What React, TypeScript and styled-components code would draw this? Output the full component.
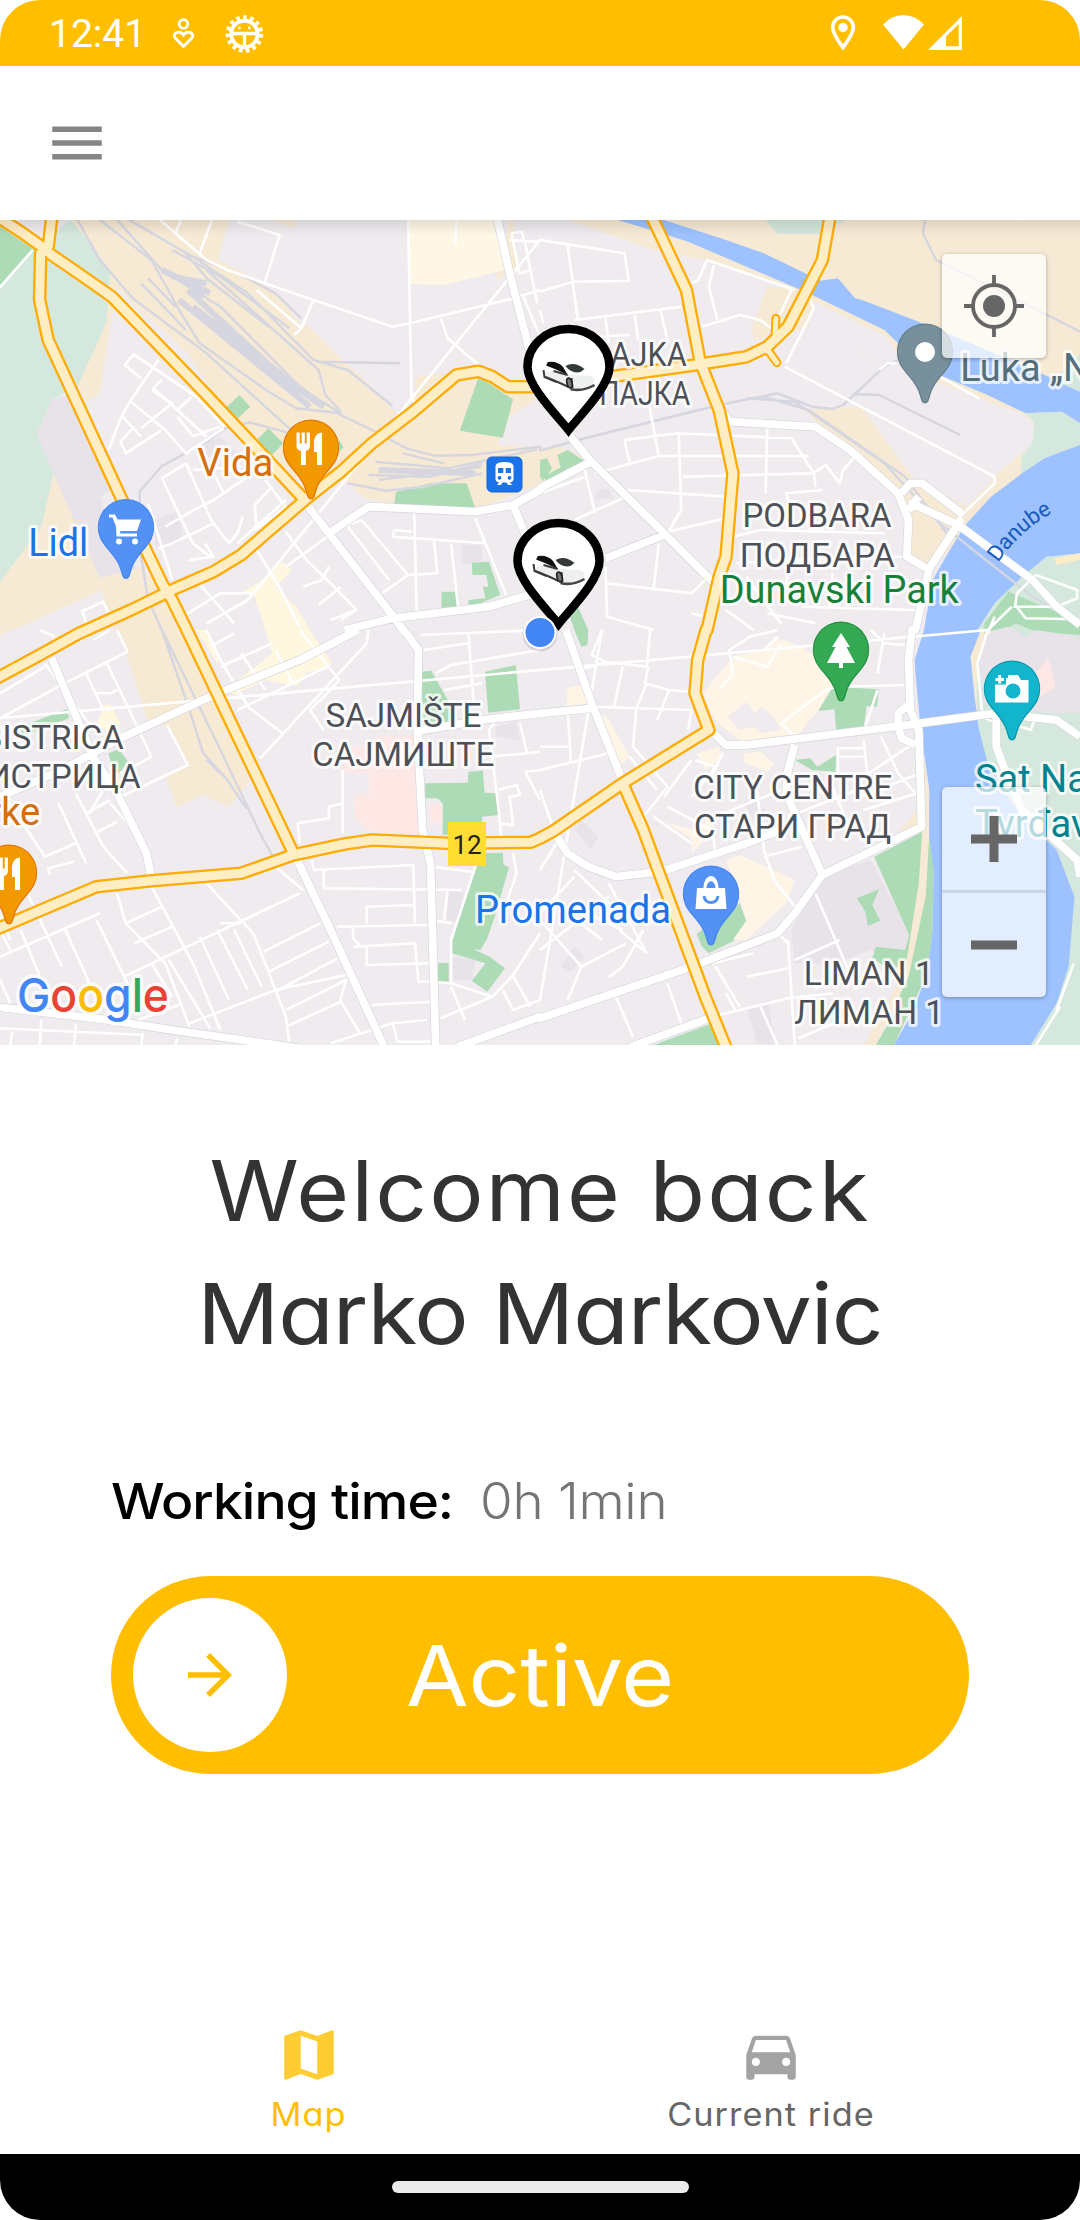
import React from "react";
import styled, { createGlobalStyle } from "styled-components";

const GlobalStyle = createGlobalStyle`
  * { box-sizing: border-box; }
  html, body { margin: 0; padding: 0; background: #fff; }
`;

const AMBER = "#ffbf00";
const UI_FONT = `Inter, "Open Sans", sans-serif`;

/* ---------- page ---------- */

const Screen = styled.div`
  width: 1080px;
  height: 2220px;
  display: flex;
  flex-direction: column;
  overflow: hidden;
  border-radius: 40px;
  background: #fff;
  font-family: ${UI_FONT};
  font-feature-settings: "cv11" 1;
`;

const StatusBar = styled.div`
  flex: 0 0 66px;
  height: 66px;
  display: flex;
  align-items: center;
  background: ${AMBER};
  color: #fff;
  padding: 0 118px 0 49px;
`;

const Clock = styled.span`
  width: 121px;
  font: 400 39px/60px Roboto, sans-serif;
  padding-top: 2px;
`;

const StatusIcons = styled.div<{ $end?: boolean }>`
  display: flex;
  align-items: center;
  margin-left: ${(p) => (p.$end ? "auto" : "0")};
`;

const Toolbar = styled.header`
  flex: 0 0 154px;
  display: flex;
  align-items: center;
  padding-left: 44px;
  background: #fff;
`;

const MenuButton = styled.button`
  display: flex;
  border: 0;
  padding: 0;
  background: none;
  color: #858585;
`;

const MapArea = styled.section`
  position: relative;
  flex: 0 0 825px;
  overflow: hidden;
  &::after {
    content: "";
    position: absolute;
    inset: 0 0 auto 0;
    height: 16px;
    background: linear-gradient(rgba(0, 0, 0, 0.1), rgba(0, 0, 0, 0));
  }
`;

const MapSvg = styled.svg`
  display: block;
`;

const MapControl = styled.div<{ $top: number }>`
  position: absolute;
  right: 34px;
  top: ${(p) => p.$top}px;
  width: 104px;
  display: flex;
  flex-direction: column;
  border-radius: 5px;
  background: rgba(255, 255, 255, 0.7);
  box-shadow: 0 1px 4px rgba(0, 0, 0, 0.3);
`;

const ControlButton = styled.button<{ $divided?: boolean }>`
  height: ${(p) => (p.$divided ? 106 : 104)}px;
  display: flex;
  align-items: center;
  justify-content: center;
  padding: 0;
  border: 0;
  border-bottom: ${(p) => (p.$divided ? "3px solid rgba(150,160,180,.3)" : "0")};
  background: none;
`;

const Greeting = styled.h1`
  margin: 84px 0 0;
  text-align: center;
  font-weight: 400;
  font-size: 84px;
  line-height: 123px;
  color: #333;
`;

const GreetingLine = styled.span<{ $spacing: number }>`
  display: block;
  letter-spacing: ${(p) => p.$spacing}px;
  transform: scaleX(1.08);
`;

const Shift = styled.main`
  flex: 1;
  display: flex;
  flex-direction: column;
  padding: 89px 111px 0;
`;

const WorkingTime = styled.div`
  display: grid;
  grid-template-columns: 369px 1fr;
  height: 74px;
  align-items: center;
  font-size: 50px;
  line-height: 74px;
`;

const TimeLabel = styled.span`
  justify-self: start;
  font-weight: 500;
  color: #000;
  letter-spacing: -0.9px;
  transform: scaleX(1.07);
  transform-origin: left;
`;

const TimeValue = styled.span`
  justify-self: start;
  font-weight: 300;
  color: #757575;
  letter-spacing: -0.3px;
  transform: scaleX(1.06);
  transform-origin: left;
`;

const SlideButton = styled.div`
  display: grid;
  grid-template-columns: 154px 1fr 154px;
  align-items: center;
  height: 198px;
  margin-top: 38px;
  padding: 0 22px;
  border-radius: 99px;
  background: ${AMBER};
`;

const Knob = styled.div`
  width: 154px;
  height: 154px;
  border-radius: 50%;
  display: flex;
  align-items: center;
  justify-content: center;
  background: #fff;
  color: ${AMBER};
`;

const SlideLabel = styled.span`
  text-align: center;
  font-size: 84px;
  color: #fff;
  transform: scaleX(1.08);
`;

const Tabs = styled.nav`
  flex: 0 0 154px;
  display: grid;
  grid-template-columns: 462px 462px;
  justify-content: center;
`;

const Tab = styled.a<{ $active?: boolean }>`
  display: flex;
  flex-direction: column;
  align-items: center;
  padding-top: 22px;
  font-size: 32px;
  line-height: 54px;
  letter-spacing: 1px;
  color: ${(p) => (p.$active ? AMBER : "#666")};
  svg { color: ${(p) => (p.$active ? "#ffcc33" : "#a3a3a3")}; }
`;

const TabLabel = styled.span`
  transform: scaleX(1.07);
`;

const SystemNav = styled.div`
  flex: 0 0 66px;
  display: flex;
  align-items: center;
  justify-content: center;
  background: #000;
`;

const HomePill = styled.div`
  width: 297px;
  height: 12px;
  border-radius: 6px;
  background: #ebebeb;
`;

/* ---------- glyph icons on the 24 unit grid ---------- */

const Icon = ({ d, size = 66 }: { d: string; size?: number }) => (
  <svg width={size} height={size} viewBox="0 0 24 24" fill="currentColor">
    <path d={d} />
  </svg>
);

const ICONS = {
  menu: "M3 18h18v-2H3v2zm0-5h18v-2H3v2zm0-7v2h18V6H3z",
  arrow: "M12 4l-1.41 1.41L16.17 11H4v2h12.17l-5.58 5.59L12 20l8-8z",
  map: "M20.5 3l-.16.03L15 5.1 9 3 3.36 4.9c-.21.07-.36.25-.36.48V20.5c0 .28.22.5.5.5l.16-.03L9 18.9l6 2.1 5.64-1.9c.21-.07.36-.25.36-.48V3.5c0-.28-.22-.5-.5-.5zM15 19l-6-2.11V5l6 2.11V19z",
  car: "M18.92 6.01C18.72 5.42 18.16 5 17.5 5h-11c-.66 0-1.21.42-1.42 1.01L3 12v8c0 .55.45 1 1 1h1c.55 0 1-.45 1-1v-1h12v1c0 .55.45 1 1 1h1c.55 0 1-.45 1-1v-8l-2.08-5.99zM6.5 16c-.83 0-1.5-.67-1.5-1.5S5.67 13 6.5 13s1.5.67 1.5 1.5S7.33 16 6.5 16zm11 0c-.83 0-1.5-.67-1.5-1.5s.67-1.5 1.5-1.5 1.5.67 1.5 1.5-.67 1.5-1.5 1.5zM5 11l1.5-4.5h11L19 11H5z",
};

const StatusLeft = () => (
  <svg width="96" height="66" viewBox="170 0 96 66" fill="none" stroke="#fff">
    <circle cx="183.5" cy="24" r="4.3" strokeWidth="2.8" />
    <path d="M183.500 46.500L175.600 38.400C172.800 35.500 175 32.300 178.500 32.300Q181.500 32.300 183.500 35Q185.500 32.300 188.500 32.300C192 32.300 194.200 35.500 191.400 38.400Z" strokeWidth="2.9" />
    <circle cx="244.4" cy="34" r="13.2" strokeWidth="4" />
    <circle cx="244.4" cy="34" r="16.8" strokeWidth="4" strokeDasharray="3.6 3.437" />
    <path d="M231 33.500H258M244.4 34V48" strokeWidth="3.4" />
    <circle cx="239.4" cy="28" r="1.4" fill="#fff" stroke="none" />
    <circle cx="249.4" cy="28" r="1.4" fill="#fff" stroke="none" />
  </svg>
);

const StatusRight = () => (
  <svg width="134" height="66" viewBox="828 0 134 66" fill="none" stroke="#fff">
    <path d="M843 47.5C839 42 832.7 34 832.7 27.3A10.3 10.3 0 0 1 853.3 27.3C853.3 34 847 42 843 47.5Z" strokeWidth="3.6" />
    <circle cx="843" cy="27.5" r="4.7" fill="#fff" stroke="none" />
    <path d="M903.5 49.5L883 24.5Q891.5 15.3 903.5 15.3T924 24.5Z" fill="#fff" stroke="none" />
    <path d="M928 50L962 16V50ZM946 46.2H958.7V24L946 36.6Z" fill="#fff" stroke="none" fillRule="evenodd" />
  </svg>
);

/* ---------- map geometry ----------
   Shapes are written per survey tile (A B / C D); a tile letter switches
   the origin and "m" starts a new sub path. */

const ORIGIN: Record<string, [number, number]> = {
  A: [0, -10],
  B: [540, -10],
  C: [0, 410],
  D: [540, 410],
};

const at = (tile: string, x: number, y: number): [number, number] => [
  ORIGIN[tile][0] + x / 2.9037,
  ORIGIN[tile][1] + y / 3,
];

const trace = (src: string, close = false) => {
  let tile = "A";
  let pen = "M";
  let out = "";
  for (const token of src.trim().split(/\s+/)) {
    if (ORIGIN[token]) tile = token;
    else if (token === "m") {
      out += close ? "Z" : "";
      pen = "M";
    } else {
      const [x, y] = token.split(",").map(Number);
      const [px, py] = at(tile, x, y);
      out += `${pen}${px.toFixed(1)} ${py.toFixed(1)}`;
      pen = "L";
    }
  }
  return out + (close ? "Z" : "");
};

const AREAS: [string, string][] = [
  // sand coloured railway and industrial ground
  ["#f7ead5", `A 205,30 665,30 632,150 740,205 800,250 880,350 895,345 1000,455 1060,510 1160,620 1200,600 1208,502 1280,490 1330,500 1390,500 1490,540 1568,560 1480,620 1445,705 1568,712 B 0,715 50,712 90,722 140,755 0,840 A 1560,825 1380,900 1140,882 1060,865 985,800 930,830 850,800 740,740 650,600 545,430 340,235 320,350 290,550 250,575 225,530`],
  ["#f7ead5", `A 95,150 110,110 150,130 120,400 95,260`],
  ["#f7ead5", `A 155,790 290,1105 400,1070 470,1130 540,1260 C 560,0 725,455 665,530 590,495 512,530 482,440 545,405 490,290 430,280 345,0 A 330,1260 295,1140 60,1250 0,1275 0,1110 120,950`],
  ["#f7ead5", `A 790,30 860,30 855,55`],
  ["#f7ead5", `A 1440,205 1445,180 1480,30 1490,30 1500,190`],
  ["#fff7e6", `A 1185,30 1440,30 1465,180 1290,225 1192,222`],
  ["#f7ead5", `B 85,30 360,30 1568,30 1568,600 1435,625 1430,700 1400,790 1310,860 1235,945 1190,1020 1130,1080 1080,1040 1075,930 1030,840 900,720 765,600 930,590 975,455 790,350 620,390 615,350 660,230 740,235 480,150 330,120`],
  ["#efebef", `B 795,275 1000,375 1060,460 1160,520 1400,612 1435,635 1430,700 1320,800 1240,890 1080,800 940,600 930,585 975,455 780,350`],
  ["#f7ead5", `D 1275,0 1300,0 1270,100 1280,220 1265,260 1250,80`],
  ["#e8e3e8", `A 150,570 210,550 250,575 335,830 290,860 355,1050 400,1075 290,1105 155,790 107,670`],
  ["#e8e3e8", `A 590,700 640,680 700,740 600,740 m 450,930 510,905 530,960 520,1000 450,1010 m 1340,1005 1400,1005 1400,1065 1340,1060`],
  ["#e8e3e8", `B 165,840 200,835 210,865 160,870`],
  ["#e8e3e8", `D 825,735 960,690 1080,920 1060,1010 960,960 860,1000 740,1000 730,900 m 600,1130 665,1110 680,1245 630,1240 m 60,1010 100,950 130,980 90,1025 m 100,600 120,570 170,620 150,660 m 590,520 620,505 660,545 620,565`],
  ["#e8e3e8", `C 1440,290 1500,275 1510,330 1440,320 m 1300,780 1350,790 1330,880 1290,865 m 1310,980 1380,990 1370,1050 1310,1050`],
  // parkland
  ["#d5e8dd", `A 0,50 100,110 205,30 250,85 320,185 310,335 225,530 150,570 107,670 155,790 120,950 0,1115`],
  ["#addbb6", `A 0,50 100,120 0,225 m 695,555 727,590 685,630 650,600 m 780,655 822,700 790,735 745,690 m 985,690 998,712 975,735 m 1390,500 1490,568 1460,683 1335,662 m 1150,845 1250,820 1355,820 1380,895 1145,882 m 1370,1058 1420,1055 1452,1155 1360,1195 1360,1170 1410,1165 1402,1130 1418,1130 1412,1095 1372,1095 m 1282,1145 1330,1145 1332,1190 1282,1195`],
  ["#addbb6", `B 50,735 80,720 132,755 20,815 10,800 60,772 m 0,750 20,745 35,775 8,812 0,800 m 80,1200 110,1190 140,1260 D 138,45 120,50 100,0`],
  ["#addbb6", `C 1225,125 1252,122 1300,210 1330,285 1225,300 m 1408,125 1498,105 1510,238 1418,248 m 1235,460 1358,458 1360,425 1402,422 1407,488 1440,490 1447,555 1400,560 1400,610 1285,615 1285,520 1270,505 1235,505 m 1390,670 1460,668 1462,705 1478,712 1440,850 1415,925 1395,960 1375,958 1422,980 1466,1015 1415,1085 1370,1052 1410,1000 1312,970 1312,930 m 1272,1000 1303,998 1303,1055 1272,1055 m 60,290 195,237 200,265 60,320 m 315,370 345,358 372,395 345,430 330,425`],
  ["#addbb6", `D 850,170 984,178 978,230 948,228 940,295 860,302 855,238 808,243 m 740,390 785,385 805,410 860,375 858,425 790,420 m 970,680 1130,595 1143,720 1140,900 1125,1030 1028,1245 975,1245 1040,1130 1060,1000 1020,1020 965,985 975,950 1060,960 1072,915 m 920,805 985,778 965,825 988,872 952,888 945,845 m 455,912 580,820 598,870 597,915 490,970 470,950 m 330,1245 500,1180 530,1245`],
  ["#d5e8dd", `B 655,30 890,30 860,45 820,72 690,72`],
  // commercial blocks
  ["#fff7df", `A 820,1055 848,1080 800,1130 860,1190 C 900,0 965,100 945,120 890,125 865,165 840,165 770,150 680,195 650,180 755,100 790,70 770,0 A 740,1160 705,1145 760,1110`],
  ["#fff7df", `C 570,0 600,0 640,80 630,100 m 300,225 320,222 350,280 340,310 280,290`],
  ["#fff5e6", `D 480,180 560,80 650,60 680,20 760,50 800,80 850,170 805,245 760,300 740,345 600,345 515,280 470,200 m 80,175 120,165 160,240 200,270 260,380 230,410 150,250 75,250 m 455,370 520,350 530,380 480,420 m 590,370 640,365 680,400 660,425 595,400 m 540,690 580,675 740,750 715,820 600,930 560,930 600,870 575,790 m 370,580 450,600 500,560 505,600 440,670 440,625`],
  ["#f7ead5", `D 1090,545 1125,540 1120,600 1030,620`],
  ["#fee8e6", `C 1090,320 1205,318 1205,400 1220,612 1065,605 1030,560 1028,500 1070,490 1072,430 1000,425 1000,350 1090,350 m 1243,530 1285,522 1285,583 1255,575`],
  ["#efebef", `D 545,260 600,215 625,250 640,230 680,260 700,300 640,310 620,290 580,300`],
  // water
  ["#9dc2ff", `B 225,30 360,30 525,85 650,130 770,190 815,212 865,205 915,265 935,270 1100,335 1250,400 1568,540 1568,640 1515,605 1410,610 1300,555 1160,495 1080,440 1040,400 1000,360 900,310 780,250 600,170 430,95 330,62`],
  ["#d5e8dd", `B 1410,610 1515,605 1568,640 1568,710 1465,745 1395,795 1400,735 1430,700 1435,635 m 1568,435 1490,510 1568,545`],
  ["#9dc2ff", `B 1568,705 1465,745 1400,790 1310,860 1235,945 1190,1020 1140,1110 1115,1260 D 1088,90 1090,130 1105,290 1130,480 1128,600 1143,720 1140,900 1125,1030 1080,1150 1028,1245 1425,1245 1568,1245 1568,0 B 1568,1200`],
  ["#f7ead5", `B 1300,1230 D 1280,0 1250,80 1262,200 1275,300 1320,200 1290,60 1320,-40 m 1105,300 1130,480 1130,620 1120,800 1070,1040 975,1245 940,1245 1060,1020 1100,760 1110,600`],
  ["#d5e8dd", `B 1568,1030 1470,1040 1400,1100 1320,1180 1270,1260 D 1300,0 1270,90 1268,230 1275,300 1300,400 1345,480 1400,560 1500,660 1552,800 1535,1010 1500,1120 1425,1245 1568,1245`],
  ["#addbb6", `B 1360,1145 1440,1180 1568,1235 D 1568,15 1440,5 1380,-20 1340,10 1290,10 1290,-20`],
  ["#e8e3e8", `D 1300,5 1360,-10 1380,0 1405,20 1440,0 1568,20 1568,248 1490,250 1380,240 1290,220 1275,100`],
  ["#fee8e6", `D 1475,80 1497,170 1430,215 1440,130`],
  ["#fdedc8", `B 1493,1045 1568,1030 1568,1050 1500,1065`],
];

const RAILS = `A 225,30 290,150 385,265 600,430 850,665 m 290,30 440,150 520,300 580,400 780,545 860,595 990,610 m 340,30 470,180 640,290 880,540 990,610
m 375,30 560,140 720,250 910,450 1010,480 1140,588 m 560,140 700,195 800,250 875,325 m 500,120 640,200 840,355 m 600,180 925,480 945,555 990,605 m 918,455 1162,460
m 410,220 540,360 m 430,205 510,290 m 540,130 600,205 780,350 m 980,610 1090,665 1180,715 1260,737 1370,735 1568,710 B 0,722 110,690 520,585 690,550 790,590 850,597 880,585 1000,470 1040,450
m 600,565 740,575 1000,760 1160,940 1430,1160 1568,1240 m 650,560 780,600 1060,800 1180,970 m 910,552 985,555 1220,675
m 1118,30 1112,70 1150,150 1330,240 1568,365 A m 1010,820 1120,842 1230,830 1400,790 m 1090,755 1300,775 1560,718 m 1070,795 1250,800 1400,760 m 1170,730 1290,760 m 1100,810 1400,770
m 835,668 725,637 655,655 600,695 470,768 405,845 410,1040 430,1170 470,1260 C 550,240 590,370 660,450 715,535 m 470,0 640,360 760,620 790,675 m 600,390 640,430`;

const YARDS = `A 470,180 610,250 m 520,270 900,590 m 545,240 860,540 m 560,290 940,590 m 740,450 940,590 m 500,200 600,220 m 520,200 590,260 m 1100,780 1380,790`;

const LANES = `A 465,30 600,150 660,180 910,270 1140,350 1190,340 1480,268 1568,240 m 690,35 812,75 770,215 m 525,30 510,70 m 615,30 580,130 m 1185,30 1195,560 1210,590 m 910,270 875,355 855,375 m 1280,325 1300,385 1390,465
m 1325,30 1322,105 m 1485,70 1515,65 1525,100 1540,180 1508,190 1485,70 m 1480,90 1568,95 m 1520,260 1568,380 m 1540,180 1560,280 m 745,240 875,355 m 95,120 0,232
m 388,433 570,560 650,650 m 388,433 362,465 410,505 m 460,450 380,570 350,625 315,720 m 470,508 445,535 515,600 555,562 m 515,620 560,678 640,650 m 380,575 480,660 540,730 650,655 m 440,540 500,580 410,655 m 355,620 410,680 m 470,660 365,730 350,695 390,650 m 515,600 600,680
m 540,760 470,805 560,1000 610,1040 m 480,950 545,910 620,870 720,800 m 540,760 620,945 m 610,770 650,850 m 560,780 700,770 m 620,940 500,1000 460,1015 m 620,940 665,1000 m 690,1000 830,870 m 770,810 830,890 740,960 m 745,950 740,885 790,830 m 665,1000 690,970 705,920 m 700,980 m 430,880 500,1110 m 550,1050 620,1040 595,1000 m 560,1100 680,1240 m 740,1010 810,1130 870,1250 m 830,965 890,1050 970,1130 1035,1200 m 830,1070 950,980 m 880,1130 935,1110 955,1070 m 925,1185 990,1130 m 960,1230 1035,1200 990,1230
m 1010,950 1130,1110 m 1050,930 1185,1095 m 1050,930 970,960 m 1185,1095 1110,1150 m 1185,1095 1270,1090 1260,990 m 1203,910 1210,1210 m 1145,960 1195,965 m 1140,980 1410,1000 m 1145,960 1140,980 m 1380,925 1470,1155 m 1310,1000 1330,1190 m 235,1205 300,1175 315,1210 m 240,1205 250,1240
m 530,1220 640,1150 740,1150 m 600,1240 720,1170
B 0,90 245,130 258,212 95,215 0,245 m 80,105 110,330 m 0,300 10,340 m 100,330 410,290 m 190,325 200,400 m 275,315 285,390 m 350,300 370,390 m 170,380 260,375 m 440,220 460,210 485,150 740,240 m 780,260 795,295 715,460 m 505,165 490,230 515,330 m 470,350 580,315 640,330 690,370 m 730,240 680,350 m 710,470 1320,800 1320,820 1230,910 m 985,480 1010,460 1035,460 m 1160,500 1275,565
m 245,690 400,670 730,685 795,790 m 245,690 260,755 m 160,790 345,738 780,738 m 318,590 345,738 m 403,670 410,900 370,970 m 255,840 540,860 m 415,800 795,790 830,765 870,820 m 660,655 655,850 m 795,790 800,830 m 130,780 160,910 m 100,930 250,860 m 0,850 130,800 m 370,965 540,925 m 345,1000 330,1140 m 720,870 715,850 820,840 m 870,820 880,780 910,745
m 190,1070 195,1220 330,1260 m 190,1120 440,1150 m 440,1210 480,1220 m 570,1060 720,1050 1060,1040 m 640,960 1000,970 m 560,980 640,960 m 540,1200 620,1260 m 760,1190 1090,1200 m 600,1100 640,1160 700,1240 m 720,1080 710,1170 m 850,1090 840,1190 m 660,1210 800,1240 m 440,1150 500,1090
m 1385,1150 1380,1185 1410,1225 1568,1228 m 1385,1150 1440,1095 1560,1140 1560,1165 1500,1190 1375,1190 m 1370,1190 1300,1260
C 0,265 170,170 m 0,190 130,110 m 130,100 265,290 m 170,170 370,65 340,0 m 310,100 380,250 440,380 350,430 m 250,130 300,240 m 280,190 320,190 340,180 m 485,285 545,405 350,500 m 115,0 160,20 m 270,30 320,0 m 60,570 130,680 220,640 m 170,520 250,700 m 220,490 300,650 370,730 m 300,480 260,550 m 145,735 140,715 215,695 m 250,550 320,510 m 275,610 340,575 m 320,520 380,590
m 600,0 640,90 720,230 820,310 m 610,50 680,10 m 640,110 790,40 m 690,240 950,110 m 755,385 1065,40 1070,0 m 870,0 985,150 950,190 900,240 m 900,240 940,300 m 800,60 850,160 m 700,70 770,180
m 1220,15 1568,0 m 1230,60 1360,40 m 1360,10 1375,210 m 1265,130 1310,105 1568,60 m 1290,180 1400,160 m 1440,270 1420,300 1450,560 1455,620 m 1510,280 1530,370 1420,380 m 1530,370 1568,365 m 1525,425 1568,420 m 1525,425 1568,510 m 995,420 995,610 m 995,520 955,530 955,565 865,580 870,640 m 1447,480 1500,465 1510,495 1480,500 1490,585 1450,580
m 905,690 912,720 1200,705 1205,880 m 940,720 940,775 1340,780 m 1065,880 1065,830 1200,825 m 980,890 1240,885 m 1025,895 1025,925 1045,945 1030,950 1205,940 1215,1055 1270,1055 m 1065,945 1065,1005 1250,1000 m 1255,710 1370,725 m 1390,680 1310,930 1310,1060 1430,1100 1490,1035 1568,910 m 1310,1060 1250,1055 m 1310,1070 1350,1170 m 1250,870 1310,880 m 1300,780 1290,870 m 1490,670 1500,730 1460,850 m 1430,1100 1280,1165
m 440,770 560,1000 640,1200 m 340,790 365,880 480,1000 550,1190 m 600,760 735,910 770,1000 830,1160 840,1240 m 365,880 470,830 m 390,940 500,890 m 360,1040 870,790 m 80,790 180,1010 m 60,900 140,1100 m 0,980 290,850 m 190,900 260,1060 m 280,870 370,1060 m 490,990 610,1195 m 580,920 665,1110 m 630,900 720,1080 m 680,900 760,1070 m 765,965 930,880 m 780,1025 955,935 m 800,1085 980,985 m 550,1180 800,1080 1005,1035 m 830,1140 1005,1050 985,1120 m 830,1190 990,1115 1045,1210 m 400,1170 520,1125 m 800,710 880,780 m 640,880 700,880 m 0,900 30,960 m 0,1050 30,1120 m 120,1170 115,1245 m 220,1180 215,1245 m 0,1195 420,1215 m 35,1205 30,1245 m 415,1210 410,1245 m 515,1225 510,1245 m 1080,1125 1250,1115 m 960,1240 1140,1180 1240,1170 m 1140,1180 1155,1235 1250,1235 m 440,1000 500,1100 m 0,850 30,930 m 1490,1040 1540,1130 m 1460,1080 1490,1140 1568,1110
D 180,0 150,75 190,95 120,120 m 190,95 310,110 320,0 m 240,110 215,230 m 150,230 440,240 m 315,110 305,160 375,180 435,185 m 375,180 340,270 m 310,160 280,235 270,350 370,470 300,560 m 0,420 200,370 m 80,240 90,400 m 0,350 80,350 m 440,240 430,300 m 260,380 340,480 m 440,390 360,500 m 450,390 510,410 440,500 m 530,370 490,460 m 510,560 700,480 m 630,480 650,660 680,750 740,830 m 650,680 760,650 m 370,530 500,600 510,670 m 330,560 440,640 m 0,480 40,600 m 60,620 0,720
m 525,175 560,130 550,60 610,20 690,0 m 560,80 660,110 700,40 m 650,60 690,20 m 700,280 830,180 860,170 1060,165 m 740,320 700,280 m 980,180 945,290 m 865,350 865,430 940,440 m 870,355 940,355 m 870,380 940,380 m 940,330 950,430 m 990,320 1040,430 1090,490 m 940,440 1085,340 m 930,500 1090,435 m 940,540 1095,490 m 850,470 900,600 m 720,560 920,480 m 960,0 1000,40 1060,45 m 1000,10 980,130
m 200,760 220,800 310,970 m 210,830 100,720 m 0,850 100,740 m 0,870 120,1010 250,940 m 60,830 180,930 m 120,1010 80,1110 m 240,900 140,850 m 230,900 310,970 m 0,960 200,800 m 200,1040 240,1010 300,900 m 220,1100 270,1220 m 370,1060 410,1180 m 500,1000 620,970 m 510,1010 580,1130 m 600,1040 720,1015 m 570,1145 540,1090 m 520,1155 720,1105 850,1090 m 720,930 740,1245 m 800,790 920,1080 m 740,990 870,930 m 640,1130 690,1245 m 860,1000 800,1080 m 690,910 720,940 m 750,1225 900,1160
m 1300,0 1270,100 1285,260 1325,280 m 1380,285 1425,300 1435,270 m 1510,1130 1440,1245 m 1550,1000 1500,1140 m 1300,10 1320,-40`;

const STREETS = `A 895,890 955,970 1135,1210 1170,1260 C 1180,10 1215,60 1212,300 1227,600 1250,700 1265,1250
A m 955,970 1070,890 1380,905 1490,885 1568,840 B 0,835 145,757
A m 1490,885 1540,1010
B m 80,670 145,750 360,970 505,1120
m 360,975 190,1045 A m 1568,1145 1420,1190 1140,1225 1000,1260 C m 1040,0 870,90 620,195 350,325 180,420 0,500
m 150,85 270,380 340,490 425,670 440,745
D m 75,0 150,220 235,440 m 0,250 150,235 C m 1220,302 1400,270 1568,250
m 860,685 960,900 1115,1250 m 0,1132 300,1168 500,1200 870,1255
m 1330,1250 1568,1160 D 0,1165 440,1010 690,910 740,850 820,735 1108,590 1100,300 1075,240 1070,90 1080,0 B 1090,1260 1130,1075 1225,925
D m 500,305 540,345 600,345 1030,290 1320,250 1430,262 1500,270 1568,320
m 740,345 720,420 715,490 820,735 m 40,605 80,670 140,710 220,740 350,725 600,640 700,600 m 265,1250 490,1165
m 1325,255 1325,350 1350,420 1400,540 1560,690 1568,740 m 1040,290 1040,250 1070,225 m 1040,290 1050,325 1090,345
B m 530,605 550,635 800,650 900,720 1040,850 1070,930 1065,1040 1130,1080
m 1070,880 1100,890 1215,945 1430,1110 1500,1190 1568,1245 m 1050,850 1075,820 1110,820 1230,915 m 1070,900 1100,860
A m 1445,30 1480,190 1540,430`;

const HIGHWAYS = `A -20,12 60,65 128,115 150,135 235,195 325,260 600,555 885,870 990,785 1080,700 1200,605 1325,495 1390,484 1430,500 1475,530 1568,530 B 205,500 450,465 480,460 600,440 660,410 720,350 820,150 842,20
A m 152,10 140,110 118,130 115,270 140,390 350,860 470,1120 500,1170 540,1255 C 850,665
A m 885,870 700,1035 620,1085 510,1135 380,1200 230,1270 C 125,70 -10,145
m -10,897 120,840 280,770 440,752 700,730 850,675 1000,642 1080,630 1300,640 1540,637 1568,625 D 40,602 240,460 490,300 450,190 458,90 482,0 B 485,1260 520,1100 540,1040 560,790 520,600 465,455 425,240 320,10
D m 240,460 300,600 350,740 480,1100 545,1265`;

const RAMPS = `B 685,325 682,390 m 640,415 665,425 688,458`;

type Label = [tile: string, x: number, y: number, width: number, text: string, color: string, size: number];

const LABELS: Label[] = [
  ["B", 205, 467, 76, "AJKA", "#4d5157", 33],
  ["B", 172, 584, 91, "ПАЈКА", "#4d5157", 33],
  ["B", 588, 952, 149, "PODBARA", "#4d5157", 33],
  ["B", 580, 1070, 155, "ПОДБАРА", "#4d5157", 33],
  ["C", 945, 290, 156, "SAJMIŠTE", "#4d5157", 33],
  ["C", 907, 407, 182, "САЈМИШТЕ", "#4d5157", 33],
  ["C", -53, 356, 142, "BISTRICA", "#4d5157", 33],
  ["C", -97, 473, 174, "БИСТРИЦА", "#4d5157", 33],
  ["D", 445, 506, 199, "CITY CENTRE", "#4d5157", 33],
  ["D", 447, 623, 197, "СТАРИ ГРАД", "#4d5157", 33],
  ["D", 766, 1064, 130, "LIMAN 1", "#4d5157", 33],
  ["D", 738, 1182, 150, "ЛИМАН 1", "#4d5157", 33],
  ["A", 573, 799, 76, "Vida", "#d56e0c", 39],
  ["A", 82, 1037, 60, "Lidl", "#1a73e8", 39],
  ["B", 522, 1179, 239, "Dunavski Park", "#188038", 39],
  ["B", 1220, 512, 130, "Luka „N", "#546e7a", 39],
  ["D", 1263, 487, 113, "Sat Na", "#00838f", 39],
  ["D", 1263, 622, 135, "Tvrđava", "#00838f", 39],
  ["C", -34, 586, 52, "rke", "#d56e0c", 39],
];

const MapText = styled.text`
  font-family: Roboto, sans-serif;
  paint-order: stroke;
  stroke: rgba(255, 255, 255, 0.75);
  stroke-width: 6px;
  stroke-linejoin: round;
`;

const LogoText = styled.text`
  font-family: Inter, sans-serif;
  font-size: 47px;
  font-weight: 500;
  paint-order: stroke;
  stroke: rgba(255, 255, 255, 0.75);
  stroke-width: 7px;
  stroke-linejoin: round;
`;

const PIN = "M0 0C-3 0-3.6-4-5-9C-9-23-20-29-25.2-40A27.6 27.6 0 1 1 25.2-40C20-29 9-23 5-9C3.6-4 3 0 0 0Z";

const Pin = ({ x, y, fill, edge, children }: { x: number; y: number; fill: string; edge: string; children?: React.ReactNode }) => (
  <g transform={`translate(${x} ${y})`}>
    <path d={PIN} fill={fill} stroke={edge} strokeWidth="1.2" />
    <g fill="#fff" transform="translate(0 -51)">{children}</g>
  </g>
);

const Cutlery = () => (
  <>
    <path d="M-14.5-15.5h3.2v11h1.9v-11h3.2v11h1.9v-11h3.2v13.5q0 4-4 5V17h-5V3q-4.400-1-4.400-5z" />
    <path d="M11-15.500V17H6V4H3V-6Q3.500-15 11-15.500Z" />
  </>
);

const CarMarker = ({ x, y }: { x: number; y: number }) => (
  <g transform={`translate(${x} ${y})`}>
    <path d="M0-5C-9-17-41-48-41-68A41 38 0 0 1 41-68C41-48 9-17 0-5Z" fill="#fff" stroke="#000" strokeWidth="8.500" />
    <path d="M-22-64L3-60L22-59Q27-57 26-51L14-45L3-48L-23-58Z" fill="#eeefef" />
    <path d="M-20-72Q-11-73-6-67L-3-62Q-12-67-21-70Z" fill="#111" stroke="#111" strokeWidth="2" />
    <path d="M-3-69Q6-74 16-66L12-63Q3-61-3-69Z" fill="#343a3a" />
    <path d="M-25-65L-24-58L-12-53M-23-58Q-8-52 0-48M-15-64L-1-60M3-57L4-47" stroke="#3c3c3c" strokeWidth="2" fill="none" />
    <path d="M2-46Q14-43 26-50" stroke="#444" strokeWidth="2.600" fill="none" />
    <ellipse cx="1" cy="-52" rx="2.500" ry="5" fill="#777" stroke="#222" strokeWidth="1.700" transform="rotate(-14 1 -52)" />
  </g>
);

const highways = trace(HIGHWAYS);
const streets = trace(STREETS);
const ramps = trace(RAMPS);

const CityMap = () => (
  <MapSvg width="1080" height="825" viewBox="0 0 1080 825">
    <rect width="1080" height="825" fill="#efebef" />
    {AREAS.map(([fill, src], i) => (
      <path key={i} d={trace(src, true)} fill={fill} />
    ))}
    <g fill="none" strokeLinejoin="round">
      <path d={trace(RAILS)} stroke="#d5d6df" strokeWidth="2.400" />
      <path d={trace(YARDS)} stroke="#d5d6df" strokeWidth="6" />
      <path d={trace(LANES)} stroke="#fff" strokeWidth="2.600" />
      <path d={streets} stroke="#d3d5de" strokeWidth="9" />
      <path d={streets} stroke="#fff" strokeWidth="7.800" />
      <path d={ramps} stroke="#ffab00" strokeWidth="9" strokeLinecap="round" />
      <path d={highways} stroke="#ffab00" strokeWidth="13.600" />
      <path d={highways} stroke="#ffeec4" strokeWidth="9" />
      <path d={ramps} stroke="#ffeec4" strokeWidth="5" strokeLinecap="round" />
    </g>

    {LABELS.map(([tile, x, y, width, text, color, size]) => {
      const [px, py] = at(tile, x, y);
      return (
        <MapText key={text} x={px} y={py} fontSize={size} fill={color} textLength={width} lengthAdjust="spacingAndGlyphs">
          {text}
        </MapText>
      );
    })}
    <MapText x="475" y="702.500" fontSize="39" fill="#1a73e8" textLength="196" lengthAdjust="spacingAndGlyphs">Promenada</MapText>

    <path id="river" d="M998 343Q1022 308 1056 291" fill="none" />
    <text fontFamily="Roboto, sans-serif" fontSize="22" fill="#185abc">
      <textPath href="#river">Danube</textPath>
    </text>

    <rect x="448" y="602" width="38" height="44" fill="#ffdd33" />
    <text x="467" y="634" textAnchor="middle" fontFamily="Roboto, sans-serif" fontSize="26" fill="#222">12</text>

    <g transform="translate(487 237)">
      <rect width="35" height="35" rx="5" fill="#1a73e8" stroke="#1765cc" />
      <path d="M8.500 9Q9 5 17.500 5T26.500 9V22Q26.500 25 23 25.200L25 28H21L19.500 25.500H15.500L14 28H10L12 25.200Q8.500 25 8.500 22Z" fill="#fff" />
      <path d="M11 11H16.300V16H11ZM18.700 11H24V16H18.700Z" fill="#1a73e8" />
      <circle cx="12.500" cy="20.800" r="1.900" fill="#1a73e8" />
      <circle cx="22.500" cy="20.800" r="1.900" fill="#1a73e8" />
    </g>

    <Pin x={311} y={279} fill="#f29900" edge="#e37400"><Cutlery /></Pin>
    <Pin x={9} y={704} fill="#f29900" edge="#e37400"><Cutlery /></Pin>
    <Pin x={126} y={358.500} fill="#5491f5" edge="#4285f4">
      <path d="M-17-13h6l2.500 5H15L11 3.500H-5.500L-6.500 6H11V9H-9.500L-10-1L-13.500-10H-17Z" />
      <circle cx="-7" cy="14" r="3" />
      <circle cx="9" cy="14" r="3" />
    </Pin>
    <Pin x={841} y={481} fill="#34a853" edge="#1e8e3e">
      <path d="M0-17L9-3H5.500L14 13H2V18H-2V13H-14L-5.500-3H-9Z" />
    </Pin>
    <Pin x={711} y={725} fill="#5491f5" edge="#4285f4">
      <path d="M-14-6H-7.500C-7-22 7-22 7.500-6H14L15.500 15H-15.500ZM-4.500-6H4.500C4-15-4-15-4.500-6Z" fillRule="evenodd" />
      <path d="M-7 2Q-6 8.500 0 8.500T7 2" fill="none" stroke="#5491f5" strokeWidth="3" />
    </Pin>
    <Pin x={1012} y={520} fill="#12b5cb" edge="#0097a7">
      <path d="M-17-4.500H-6V-11H-4L-4-14H6L9-9H16.500V13.500H-17Z" />
      <circle cx="1" cy="2" r="7.500" fill="#12b5cb" />
      <path d="M-16.500-9.500H-8M-12.300-14V-5.500" stroke="#12b5cb" strokeWidth="7" />
      <path d="M-16.500-9.500H-8M-12.300-14V-5.500" stroke="#fff" strokeWidth="3" />
    </Pin>
    <Pin x={925} y={183} fill="#78909c" edge="#607d8b"><circle r="10" /></Pin>

    <CarMarker x={568.500} y={215} />
    <CarMarker x={558.500} y={409} />
    <circle cx="540" cy="414" r="17.500" fill="rgba(0,0,0,.12)" />
    <circle cx="540" cy="412.500" r="16.500" fill="#fff" />
    <circle cx="540" cy="412.500" r="14.500" fill="#4285f4" />

    <LogoText x="17" y="791.500" textLength="152" lengthAdjust="spacingAndGlyphs">
      <tspan fill="#4285f4">G</tspan><tspan fill="#ea4335">o</tspan><tspan fill="#fbbc04">o</tspan><tspan fill="#4285f4">g</tspan><tspan fill="#34a853">l</tspan><tspan fill="#ea4335">e</tspan>
    </LogoText>
  </MapSvg>
);

const Locate = () => (
  <svg width="60" height="62" viewBox="-30 -31 60 62" fill="none" stroke="#666" strokeWidth="3.800">
    <circle r="21" />
    <circle r="11" fill="#666" stroke="none" />
    <path d="M0-31V-21M0 21V31M-30 0H-21M21 0H30" />
  </svg>
);

const ZoomGlyph = ({ plus }: { plus?: boolean }) => (
  <svg width="46" height="46" viewBox="-23 -23 46 46" stroke="#666" strokeWidth="9">
    <path d={plus ? "M-23 0H23M0-23V23" : "M-23 0H23"} />
  </svg>
);

export default function App() {
  return (
    <>
      <GlobalStyle />
      <Screen>
        <StatusBar>
          <Clock>12:41</Clock>
          <StatusIcons><StatusLeft /></StatusIcons>
          <StatusIcons $end><StatusRight /></StatusIcons>
        </StatusBar>
        <Toolbar>
          <MenuButton aria-label="Menu"><Icon d={ICONS.menu} /></MenuButton>
        </Toolbar>
        <MapArea>
          <CityMap />
          <MapControl $top={34}>
            <ControlButton aria-label="My location"><Locate /></ControlButton>
          </MapControl>
          <MapControl $top={567}>
            <ControlButton aria-label="Zoom in" $divided><ZoomGlyph plus /></ControlButton>
            <ControlButton aria-label="Zoom out"><ZoomGlyph /></ControlButton>
          </MapControl>
        </MapArea>
        <Greeting>
          <GreetingLine $spacing={1.9}>Welcome back</GreetingLine>
          <GreetingLine $spacing={-0.9}>Marko Markovic</GreetingLine>
        </Greeting>
        <Shift>
          <WorkingTime>
            <TimeLabel>Working time:</TimeLabel>
            <TimeValue>0h 1min</TimeValue>
          </WorkingTime>
          <SlideButton>
            <Knob><Icon d={ICONS.arrow} /></Knob>
            <SlideLabel>Active</SlideLabel>
          </SlideButton>
        </Shift>
        <Tabs>
          <Tab $active><Icon d={ICONS.map} /><TabLabel>Map</TabLabel></Tab>
          <Tab><Icon d={ICONS.car} /><TabLabel>Current ride</TabLabel></Tab>
        </Tabs>
        <SystemNav><HomePill /></SystemNav>
      </Screen>
    </>
  );
}
